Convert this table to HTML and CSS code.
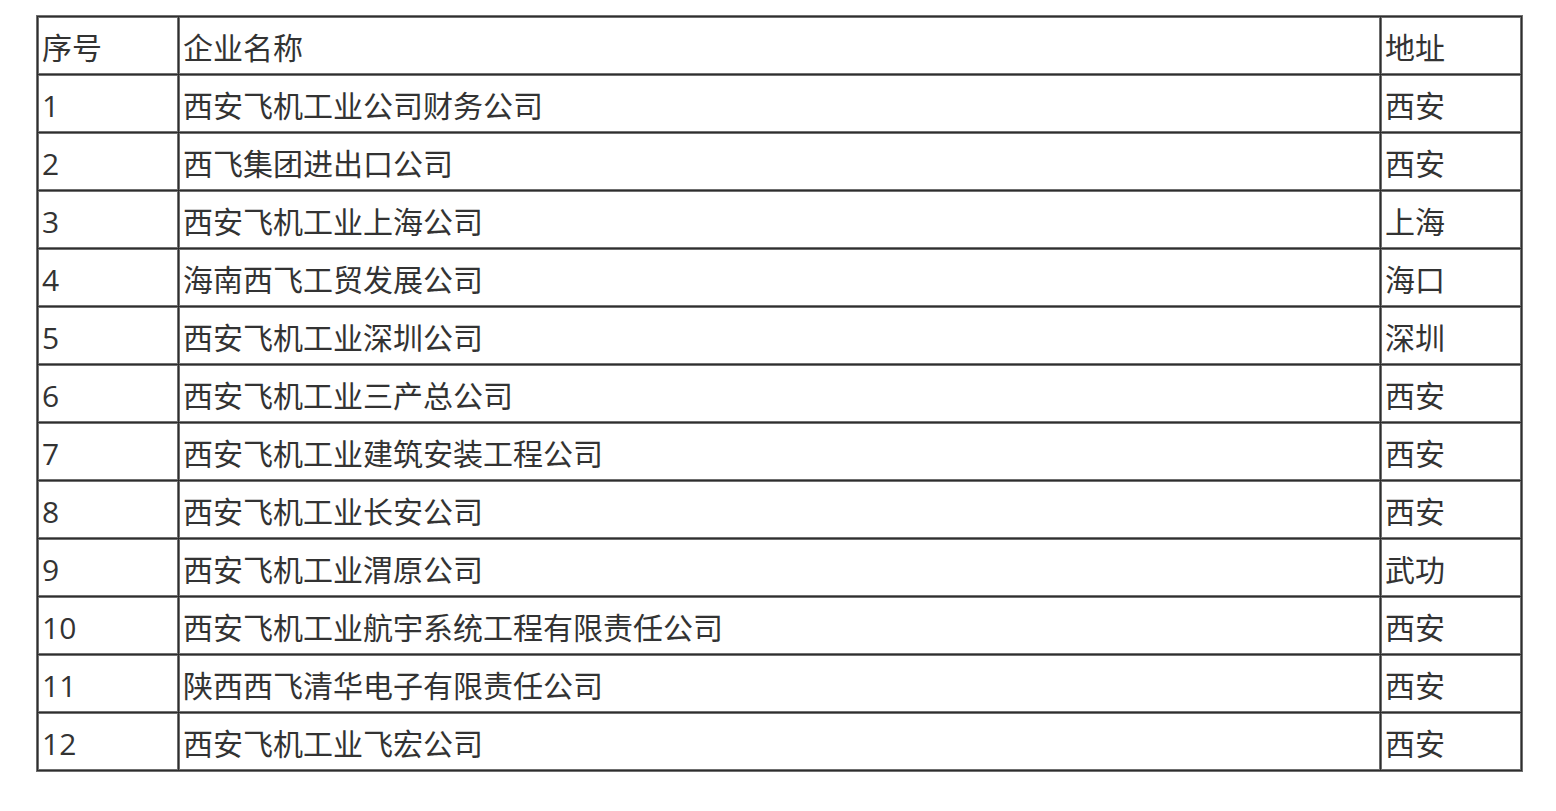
FILE: index.html
```html
<!DOCTYPE html>
<html lang="zh-CN">
<head>
<meta charset="utf-8">
<title>企业列表</title>
<link rel="stylesheet" href="styles.css">
</head>
<body>
<table class="list">
  <tr><td class="c1">序号</td><td class="c2">企业名称</td><td class="c3">地址</td></tr>
  <tr><td class="c1">1</td><td class="c2">西安飞机工业公司财务公司</td><td class="c3">西安</td></tr>
  <tr><td class="c1">2</td><td class="c2">西飞集团进出口公司</td><td class="c3">西安</td></tr>
  <tr><td class="c1">3</td><td class="c2">西安飞机工业上海公司</td><td class="c3">上海</td></tr>
  <tr><td class="c1">4</td><td class="c2">海南西飞工贸发展公司</td><td class="c3">海口</td></tr>
  <tr><td class="c1">5</td><td class="c2">西安飞机工业深圳公司</td><td class="c3">深圳</td></tr>
  <tr><td class="c1">6</td><td class="c2">西安飞机工业三产总公司</td><td class="c3">西安</td></tr>
  <tr><td class="c1">7</td><td class="c2">西安飞机工业建筑安装工程公司</td><td class="c3">西安</td></tr>
  <tr><td class="c1">8</td><td class="c2">西安飞机工业长安公司</td><td class="c3">西安</td></tr>
  <tr><td class="c1">9</td><td class="c2">西安飞机工业渭原公司</td><td class="c3">武功</td></tr>
  <tr><td class="c1">10</td><td class="c2">西安飞机工业航宇系统工程有限责任公司</td><td class="c3">西安</td></tr>
  <tr><td class="c1">11</td><td class="c2">陕西西飞清华电子有限责任公司</td><td class="c3">西安</td></tr>
  <tr><td class="c1">12</td><td class="c2">西安飞机工业飞宏公司</td><td class="c3">西安</td></tr>
</table>
</body>
</html>
```
FILE: styles.css
```css
html, body {
  margin: 0;
  padding: 0;
  background: #fff;
}
body {
  padding: 15px 0 0 36px;
  font-family: "Open Sans", "Noto Sans CJK SC", sans-serif;
  color: #333;
}
.list {
  box-sizing: border-box;
  width: 1487px;
  table-layout: fixed;
  border-collapse: separate;
  border-spacing: 1px;
  border: 1px solid #6f6f6f;
  background: #2e2e2e;
}
.list td {
  box-sizing: border-box;
  height: 57px;
  background: #fff;
  border: 1px solid #6f6f6f;
  padding: 4px 0 0 3px;
  font-size: 30px;
  line-height: 40px;
  vertical-align: middle;
  white-space: nowrap;
}
.list .c1 { width: 140px; }
.list .c3 { width: 140px; }
```
